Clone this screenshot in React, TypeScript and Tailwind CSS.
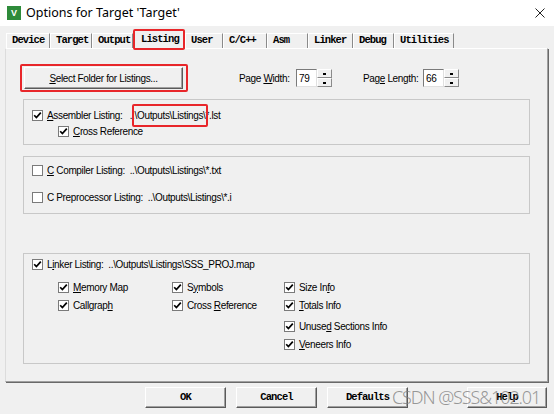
import React from "react";

const SANS = "font-['Liberation_Sans',Arial,sans-serif] text-[10px] tracking-[-0.35px] text-black";
const MONO = "font-['Liberation_Mono','Courier_New',monospace] text-[10.5px] font-semibold tracking-[-0.9px] text-black";

function Check({ checked = false }: { checked?: boolean }) {
  return (
    <span className="w-[11px] h-[11px] border border-[#7a7a7a] bg-white flex items-center justify-center shrink-0">
      {checked && (
        <svg width="9" height="9" viewBox="0 0 9 9">
          <path d="M1.2 4.2 L3.4 6.6 L7.8 1.6" stroke="#000" strokeWidth="1.7" fill="none" />
        </svg>
      )}
    </span>
  );
}

function CheckRow({ checked, children }: { checked?: boolean; children: React.ReactNode }) {
  return (
    <div className="flex items-center gap-[4px] h-[14px] whitespace-nowrap">
      <Check checked={checked} />
      <span className={SANS}>{children}</span>
    </div>
  );
}

function Spinner({ value }: { value: string }) {
  return (
    <div className="flex items-stretch h-[18px]">
      <div className="w-[21px] bg-white border border-t-[#7a7a7a] border-l-[#7a7a7a] border-r-[#e0e0e0] border-b-[#e0e0e0] flex items-center pl-[2px]">
        <span className={SANS}>{value}</span>
      </div>
      <div className="w-[15px] flex flex-col">
        <div className="flex-1 bg-[#f0f0f0] border border-t-white border-l-white border-r-[#8a8a8a] border-b-[#8a8a8a] flex items-center justify-center">
          <span className="w-[3px] h-[2px] bg-black" />
        </div>
        <div className="flex-1 bg-[#f0f0f0] border border-t-white border-l-white border-r-[#8a8a8a] border-b-[#8a8a8a] flex items-center justify-center">
          <span className="w-[3px] h-[2px] bg-black" />
        </div>
      </div>
    </div>
  );
}

const tabs: { label: string; w: string; sel?: boolean }[] = [
  { label: "Device", w: "w-[44px]" },
  { label: "Target", w: "w-[42px]" },
  { label: "Output", w: "w-[41px]" },
  { label: "Listing", w: "w-[52px]", sel: true },
  { label: "User", w: "w-[38px]" },
  { label: "C/C++", w: "w-[44px]" },
  { label: "Asm", w: "w-[41px]" },
  { label: "Linker", w: "w-[45px]" },
  { label: "Debug", w: "w-[41px]" },
  { label: "Utilities", w: "w-[60px]" },
];

function ClassicButton({ w, children }: { w: string; children: React.ReactNode }) {
  return (
    <div
      className={`${w} h-[21px] bg-[#f0f0f0] border border-t-white border-l-white border-r-[#5a5a5a] border-b-[#5a5a5a] shadow-[inset_-1px_-1px_0_#a0a0a0] flex items-center justify-center`}
    >
      <span className={MONO}>{children}</span>
    </div>
  );
}

export default function App() {
  return (
    <div className="w-[554px] h-[414px] overflow-hidden bg-[#f0f0f0] flex flex-col">
      {/* Title bar */}
      <div className="h-[26px] bg-white flex items-center shrink-0">
        <div className="ml-[7px] w-[14px] h-[14px] bg-[#2e8b3a] flex items-center justify-center">
          <span className="text-white text-[9px] font-bold leading-none font-['Liberation_Sans',sans-serif]">V</span>
        </div>
        <span className="ml-[5px] font-['Noto_Sans',sans-serif] text-[12.5px] text-black leading-none">
          Options for Target 'Target'
        </span>
        <svg className="ml-auto mr-[9px]" width="10" height="10" viewBox="0 0 10 10">
          <path d="M0.5 0.5 L9.5 9.5 M9.5 0.5 L0.5 9.5" stroke="#222" strokeWidth="1" />
        </svg>
      </div>

      {/* Tabs */}
      <div className="flex items-end h-[22px] pl-[6px] shrink-0">
        {tabs.map((t) =>
          t.sel ? (
            <div key={t.label} className={`${t.w} relative z-10 -mb-px h-[19px]`}>
              <div className="h-full bg-[#f0f0f0] border-t border-l border-r border-t-white border-l-white border-r-[#8a8a8a] flex items-center pl-[7px]">
                <span className={MONO}>{t.label}</span>
              </div>
              <div className="absolute left-0 right-0 top-[-1px] bottom-[-1px] border-2 border-[#e8262a] rounded-[2px]" />
            </div>
          ) : (
            <div
              key={t.label}
              className={`${t.w} h-[15px] border-t border-l border-r border-t-white border-l-white border-r-[#8a8a8a] flex items-center pl-[5px]`}
            >
              <span className={MONO}>{t.label}</span>
            </div>
          )
        )}
      </div>

      {/* Panel */}
      <div className="ml-[5px] w-[543px] h-[334px] shrink-0 border border-t-white border-l-[#dcdcdc] border-r-[#a0a0a0] border-b-[#a0a0a0] shadow-[1px_1px_0_0_#696969] px-[17px]">
        {/* top row */}
        <div className="mt-[18px] flex items-center h-[22px]">
          <div className="relative ml-[1px]">
            <div className="w-[159px] h-[22px] bg-[#f0f0f0] border border-t-white border-l-white border-r-[#5a5a5a] border-b-[#5a5a5a] shadow-[inset_-1px_-1px_0_#a0a0a0] flex items-center justify-center">
              <span className={SANS}>
                <u>S</u>elect Folder for Listings...
              </span>
            </div>
            <div className="absolute left-[-4px] right-[-5px] top-[-3px] bottom-[-3px] border-2 border-[#e8262a] rounded-[2px]" />
          </div>
          <span className={`${SANS} ml-[56px] w-[57px]`}>
            Page <u>W</u>idth:
          </span>
          <Spinner value="79" />
          <span className={`${SANS} ml-[31px] w-[60px]`}>
            Pag<u>e</u> Length:
          </span>
          <Spinner value="66" />
        </div>

        {/* Group 1 */}
        <div className="mt-[10px] h-[46px] border border-[#c8c8c8] pl-[8px] pt-[8px] flex flex-col gap-[2px]">
          <div className="flex items-center gap-[4px] h-[14px] whitespace-nowrap">
            <Check checked />
            <span className={SANS}>
              <u>A</u>ssembler Listing:&nbsp;&nbsp;&nbsp;..
              <span className="relative">
                \Outputs\Listings\
                <span className="absolute left-[-3px] right-[-2px] top-[-6px] bottom-[-6px] border-2 border-[#e8262a] rounded-[2px]" />
              </span>
              *.lst
            </span>
          </div>
          <div className="ml-[26px]">
            <CheckRow checked>
              <u>C</u>ross Reference
            </CheckRow>
          </div>
        </div>

        {/* Group 2 */}
        <div className="mt-[11px] h-[58px] border border-[#c8c8c8] pl-[8px] pt-[6px] flex flex-col gap-[13px]">
          <CheckRow>
            <u>C</u> Compiler Listing:&nbsp;&nbsp;..\Outputs\Listings\*.txt
          </CheckRow>
          <CheckRow>C Preprocessor Listing:&nbsp;&nbsp;..\Outputs\Listings\*.i</CheckRow>
        </div>

        {/* Group 3 */}
        <div className="mt-[39px] h-[111px] border border-[#c8c8c8] pl-[8px] pt-[3px]">
          <CheckRow checked>
            L<u>i</u>nker Listing:&nbsp;&nbsp;..\Outputs\Listings\SSS_PROJ.map
          </CheckRow>
          <div className="mt-[9px] pl-[26px] grid grid-cols-[114px_112px_1fr] gap-y-[4px]">
            <CheckRow checked>
              <u>M</u>emory Map
            </CheckRow>
            <CheckRow checked>
              S<u>y</u>mbols
            </CheckRow>
            <CheckRow checked>
              Size In<u>f</u>o
            </CheckRow>
            <CheckRow checked>
              Callgrap<u>h</u>
            </CheckRow>
            <CheckRow checked>
              Cross <u>R</u>eference
            </CheckRow>
            <CheckRow checked>
              <u>T</u>otals Info
            </CheckRow>
            <div />
            <div />
            <div className="mt-[3px]">
              <CheckRow checked>
                Unuse<u>d</u> Sections Info
              </CheckRow>
            </div>
            <div />
            <div />
            <CheckRow checked>
              <u>V</u>eneers Info
            </CheckRow>
          </div>
        </div>
      </div>

      {/* Bottom buttons */}
      <div className="relative mt-[5px] flex items-center pl-[145px] h-[21px]">
        <ClassicButton w="w-[81px]">OK</ClassicButton>
        <div className="ml-[10px]">
          <ClassicButton w="w-[81px]">Cancel</ClassicButton>
        </div>
        <div className="ml-[10px]">
          <ClassicButton w="w-[81px]">Defaults</ClassicButton>
        </div>
        <div className="ml-[59px]">
          <ClassicButton w="w-[80px]">Help</ClassicButton>
        </div>
        <span className="absolute left-[392px] top-[-3px] font-['Noto_Sans',sans-serif] font-light text-[18px] tracking-[-1.1px] leading-[26px] text-[#7f7f7f]/80 whitespace-nowrap pointer-events-none">
          CSDN @SSS&amp;102.01
        </span>
      </div>
    </div>
  );
}
